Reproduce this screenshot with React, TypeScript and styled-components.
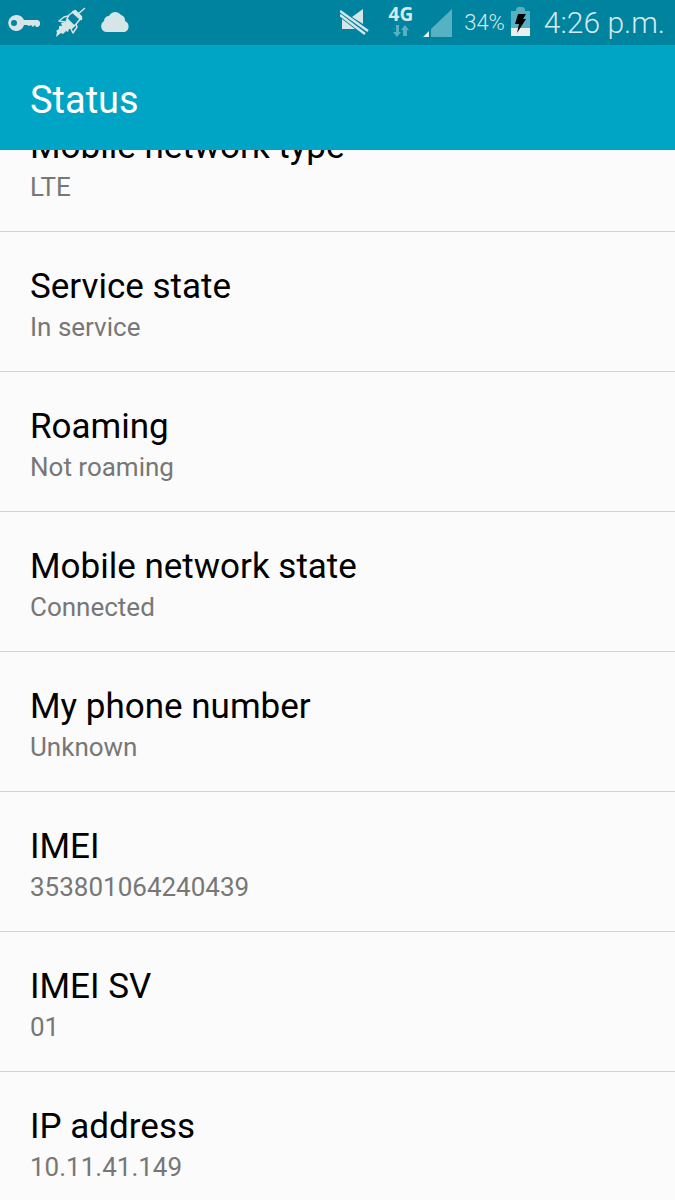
import React from "react";
import styled, { createGlobalStyle } from "styled-components";

const GlobalStyle = createGlobalStyle`
  * { box-sizing: border-box; }
  body {
    margin: 0;
    background: #fbfbfb;
    font-family: Roboto, "Liberation Sans", sans-serif;
  }
`;

const Screen = styled.div`
  display: flex;
  flex-direction: column;
  height: 100vh;
  overflow: hidden;
`;

const StatusBar = styled.div`
  display: flex;
  flex: none;
  align-items: center;
  justify-content: space-between;
  height: 45px;
  padding: 0 10px 0 8px;
  background: #00839e;
  color: #d6eaee;
`;

const IconGroup = styled.div`
  display: flex;
  align-items: center;
  gap: 13px;
`;

const Indicators = styled.div`
  display: flex;
  align-items: center;
`;

const Icon = styled.svg`
  display: block;
  flex: none;
`;

const Network = styled.div`
  display: flex;
  flex-direction: column;
  align-items: center;
  margin: 0 9px 4px 19px;
`;

const NetworkLabel = styled.span`
  font: 700 19px/20px "Open Sans", sans-serif;
`;

const BatteryLevel = styled.span`
  margin: 0 6px 0 11px;
  font-size: 22px;
  font-weight: 300;
  line-height: 46px;
`;

const Clock = styled.time`
  margin-left: 14px;
  font-size: 30px;
  font-weight: 300;
  line-height: 46px;
  white-space: nowrap;
`;

const TitleBar = styled.header`
  flex: none;
  padding: 35px 30px 30px;
  background: #00a5c6;
`;

const Title = styled.h1`
  margin: 0;
  color: #fff;
  font-size: 38px;
  font-weight: 400;
  line-height: 40px;
`;

const Viewport = styled.main`
  flex: 1;
  min-height: 0;
  overflow: hidden;
`;

const List = styled.dl`
  margin: -58px 0 0;
`;

const Row = styled.div`
  height: 140px;
  padding: 33px 30px 0;
  border-bottom: 1px solid #d3d5d5;
`;

const Label = styled.dt`
  color: #000;
  font-size: 35px;
  line-height: 44px;
`;

const Value = styled.dd`
  margin: 0;
  color: #777;
  font-size: 26px;
  line-height: 36px;
`;

const KeyIcon = () => (
  <Icon width="34" height="20" viewBox="0 0 34 20" aria-hidden="true">
    <path
      fill="#d6e5e8"
      fillRule="evenodd"
      d="M9 2a8 8 0 0 1 7 5h14l2 2v3l-2 2h-2l-1-2-2 2-2-2-2 1-2-1h-3A8 8 0 1 1 9 2ZM6 7a3 3 0 1 0 0 6 3 3 0 0 0 0-6Z"
    />
  </Icon>
);

const RocketIcon = () => (
  <Icon width="32" height="32" viewBox="0 0 32 32" aria-hidden="true">
    <path fill="#d6e5e8" d="m12 11 8 8-3 3-3 0-1 3-2-1-3 3-2-1-5 4 1-5-1-1 3-2 0-3 3 0-1-3 4-1Z" />
    <g fill="none" stroke="#d6e5e8" strokeWidth="1.5" strokeLinejoin="round">
      <path d="m18 5-4 3-2 4 7 7 3-3 4-5" />
      <path d="m13 9-4 1-5 4 6 1M21 17l1 3-4 6-2-4" />
      <path strokeWidth="2.5" d="m18 5 2-1 6 6 0 2Z" />
      <path d="m23 7 7-6" />
    </g>
  </Icon>
);

const CloudIcon = () => (
  <Icon width="32" height="24" viewBox="0 0 32 24" aria-hidden="true">
    <path fill="#d6e5e8" d="M6 21a6 6 0 0 1-2-11 5 5 0 0 1 5-5 7 7 0 0 1 12-1 6 6 0 0 1 4 6 6 6 0 0 1 0 11Z" />
  </Icon>
);

const MutedIcon = () => (
  <Icon width="30" height="30" viewBox="0 0 30 30" aria-hidden="true">
    <path fill="#d6e5e8" d="M2 11v10h13ZM12 9l11-8v15Z" />
    <path stroke="#00839e" strokeWidth="2" d="m1 5 27 20" />
    <path stroke="#d6e5e8" strokeWidth="2.5" d="m0 3 28 20M0 7l25 19" />
  </Icon>
);

const DataArrowsIcon = () => (
  <Icon width="16" height="14" viewBox="0 0 16 14" aria-hidden="true">
    <path fill="#56b2c2" d="M3 1h3v7h2l-4 5-4-5h3ZM10 12V6H8l4-5 4 5h-2v6Z" />
  </Icon>
);

const SignalIcon = () => (
  <Icon width="31" height="30" viewBox="0 0 31 30" aria-hidden="true">
    <path fill="#56b2c2" d="M9 21 30 1v28H9Z" />
    <path fill="#e4f1f3" d="m1 29 6-6v6Z" />
  </Icon>
);

const BatteryIcon = () => (
  <Icon width="19" height="31" viewBox="0 0 19 31" aria-hidden="true">
    <path fill="#56b2c2" d="M0 4h5V2l2-2h5l2 2v2h5v18H0Z" />
    <path fill="#e9eeee" d="M0 21h19v8H0Z" />
    <path fill="#000" d="m7 7h8l-3 5h3L6 26l2-9H4Z" />
  </Icon>
);

const entries = [
  ["Mobile network type", "LTE"],
  ["Service state", "In service"],
  ["Roaming", "Not roaming"],
  ["Mobile network state", "Connected"],
  ["My phone number", "Unknown"],
  ["IMEI", "353801064240439"],
  ["IMEI SV", "01"],
  ["IP address", "10.11.41.149"],
];

export default function App() {
  return (
    <Screen>
      <GlobalStyle />
      <StatusBar>
        <IconGroup>
          <KeyIcon />
          <RocketIcon />
          <CloudIcon />
        </IconGroup>
        <Indicators>
          <MutedIcon />
          <Network>
            <NetworkLabel>4G</NetworkLabel>
            <DataArrowsIcon />
          </Network>
          <SignalIcon />
          <BatteryLevel>34%</BatteryLevel>
          <BatteryIcon />
          <Clock>4:26 p.m.</Clock>
        </Indicators>
      </StatusBar>
      <TitleBar>
        <Title>Status</Title>
      </TitleBar>
      <Viewport>
        <List>
          {entries.map(([label, value]) => (
            <Row key={label}>
              <Label>{label}</Label>
              <Value>{value}</Value>
            </Row>
          ))}
        </List>
      </Viewport>
    </Screen>
  );
}
